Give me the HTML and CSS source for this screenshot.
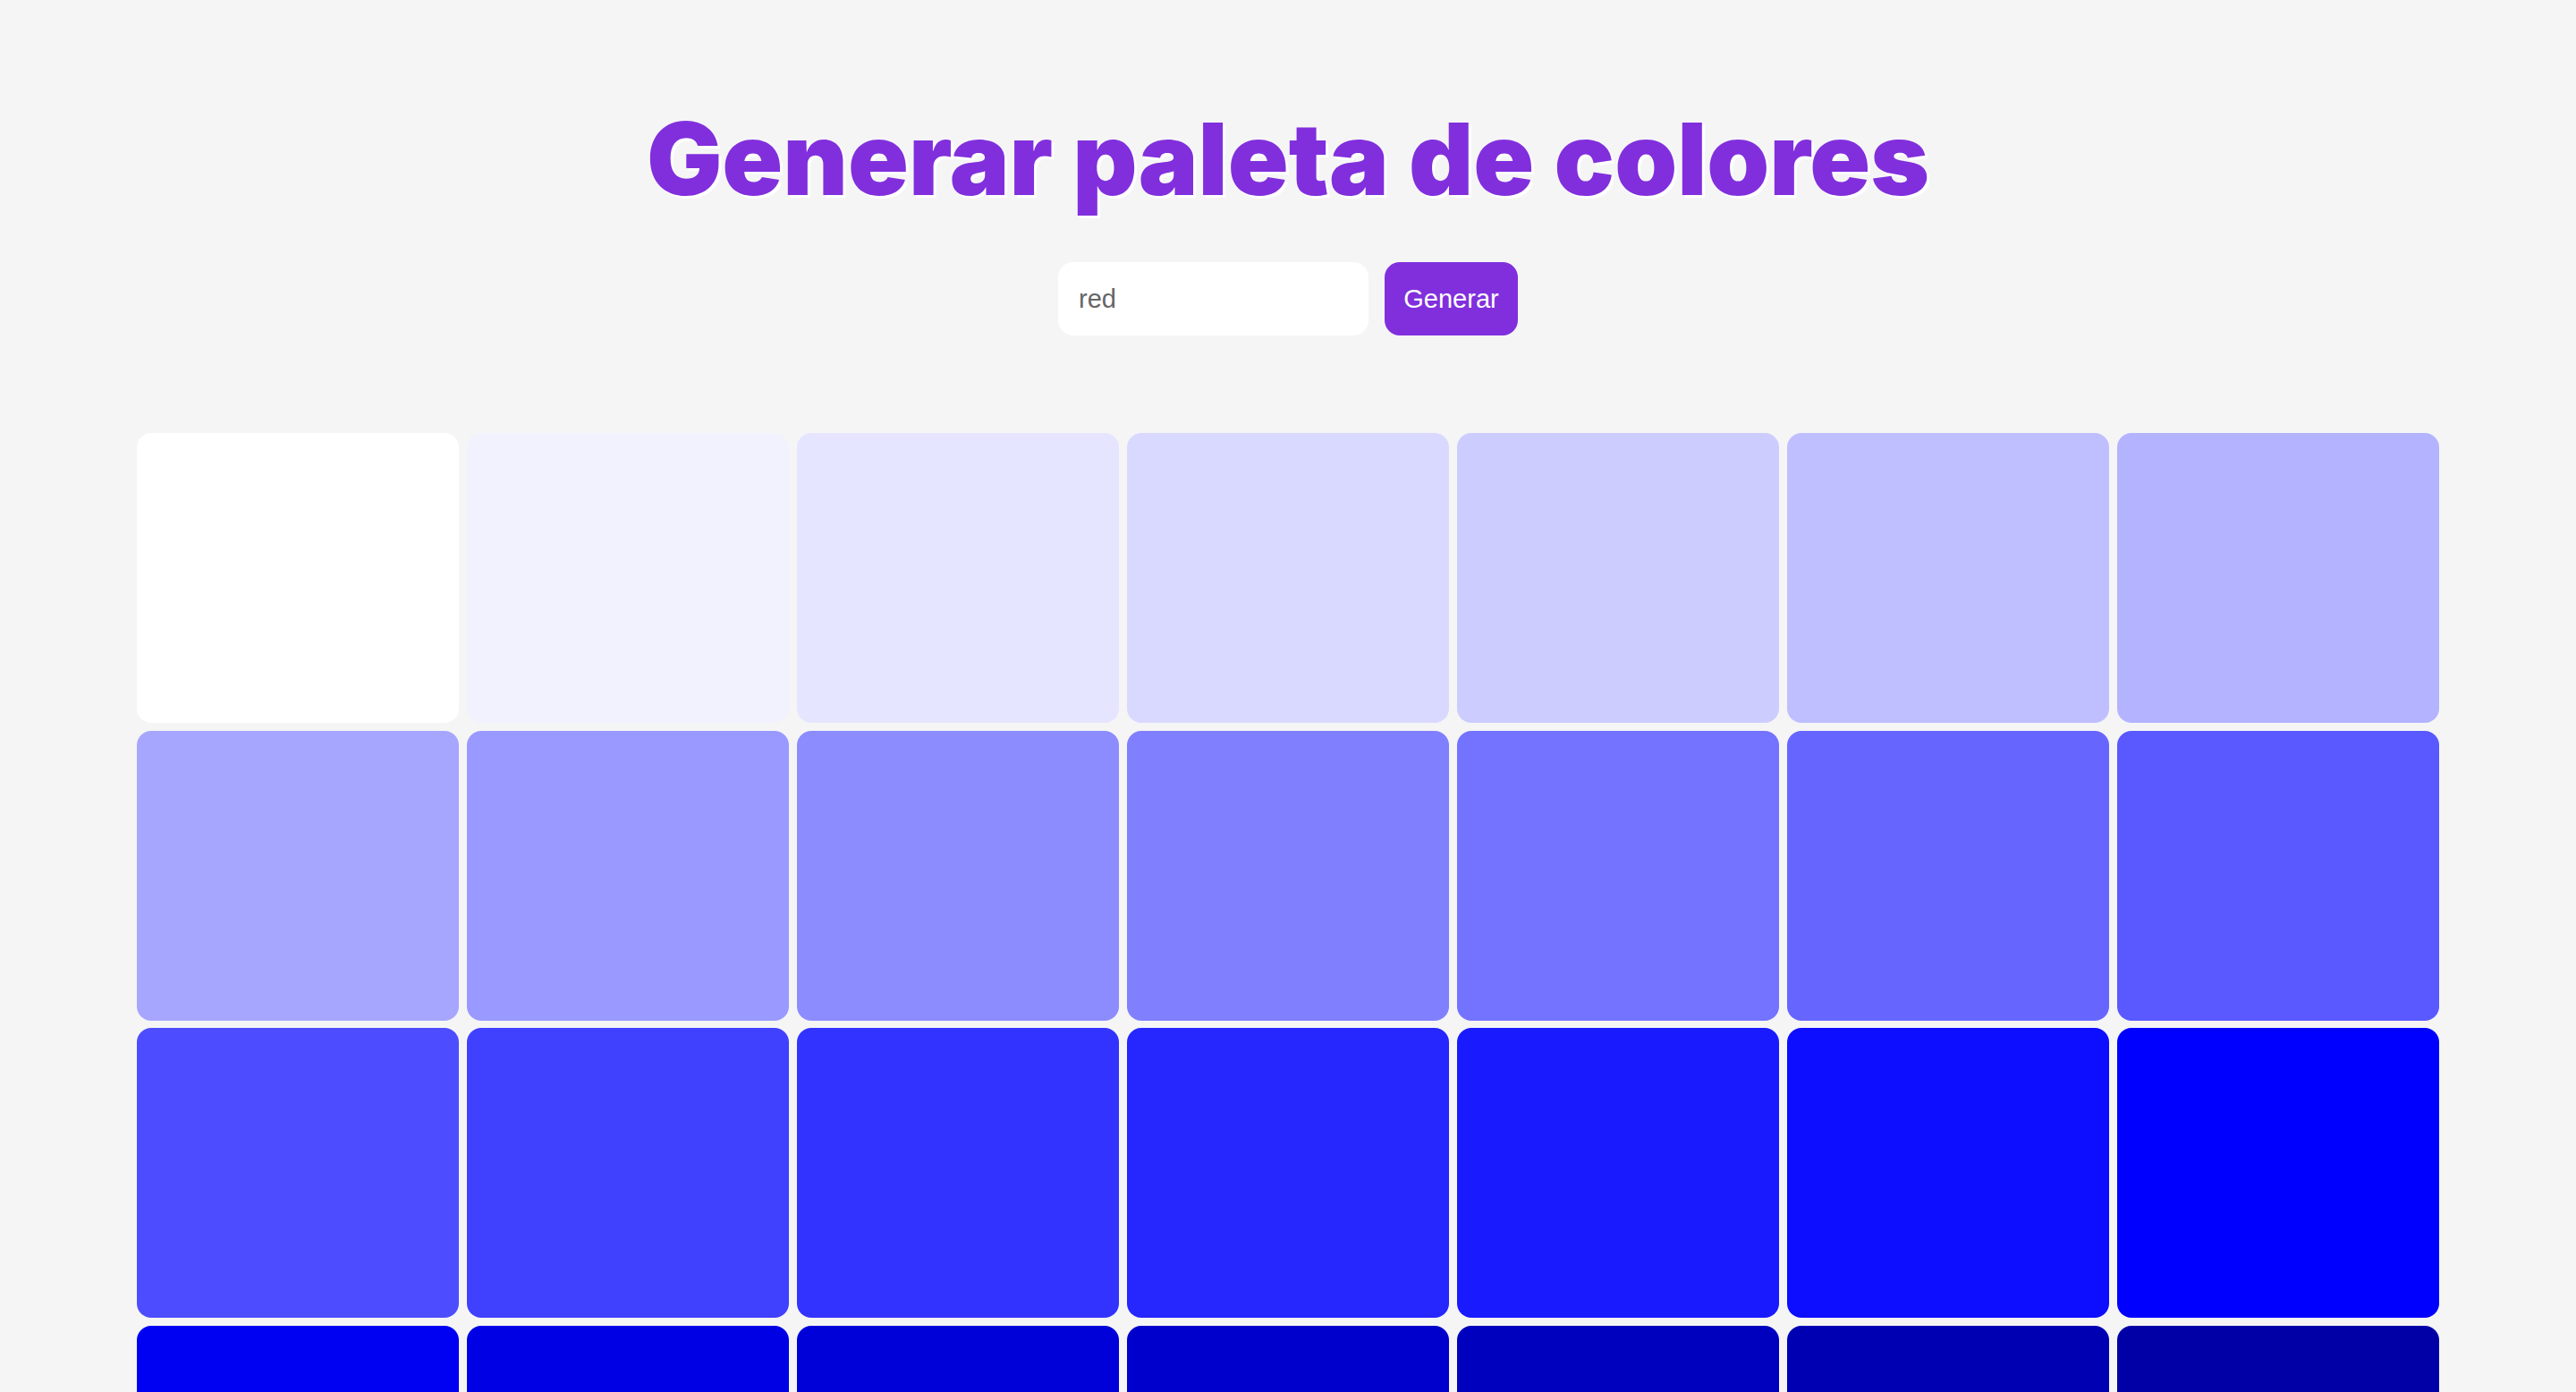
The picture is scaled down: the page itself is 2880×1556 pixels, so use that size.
FILE: index.html
```html
<!DOCTYPE html>
<html lang="es">
<head>
<meta charset="utf-8">
<title>Generar paleta de colores</title>
<link rel="stylesheet" href="styles.css">
</head>
<body>
<main class="page">
  <h1 class="title">Generar paleta de colores</h1>
  <form class="search" onsubmit="return false">
    <input class="search-input" type="text" value="red">
    <button class="search-btn" type="submit">Generar</button>
  </form>
  <section class="palette">
    <div class="swatch" style="background:#ffffff"></div>
    <div class="swatch" style="background:#f2f2ff"></div>
    <div class="swatch" style="background:#e5e5ff"></div>
    <div class="swatch" style="background:#d9d9ff"></div>
    <div class="swatch" style="background:#ccccff"></div>
    <div class="swatch" style="background:#bfbfff"></div>
    <div class="swatch" style="background:#b3b3ff"></div>
    <div class="swatch" style="background:#a6a6ff"></div>
    <div class="swatch" style="background:#9999ff"></div>
    <div class="swatch" style="background:#8c8cff"></div>
    <div class="swatch" style="background:#8080ff"></div>
    <div class="swatch" style="background:#7373ff"></div>
    <div class="swatch" style="background:#6666ff"></div>
    <div class="swatch" style="background:#5959ff"></div>
    <div class="swatch" style="background:#4d4dff"></div>
    <div class="swatch" style="background:#4040ff"></div>
    <div class="swatch" style="background:#3333ff"></div>
    <div class="swatch" style="background:#2626ff"></div>
    <div class="swatch" style="background:#1a1aff"></div>
    <div class="swatch" style="background:#0d0dff"></div>
    <div class="swatch" style="background:#0000ff"></div>
    <div class="swatch" style="background:#0000f2"></div>
    <div class="swatch" style="background:#0000e5"></div>
    <div class="swatch" style="background:#0000d9"></div>
    <div class="swatch" style="background:#0000cc"></div>
    <div class="swatch" style="background:#0000bf"></div>
    <div class="swatch" style="background:#0000b3"></div>
    <div class="swatch" style="background:#0000a6"></div>
    <div class="swatch" style="background:#000099"></div>
    <div class="swatch" style="background:#00008c"></div>
    <div class="swatch" style="background:#000080"></div>
    <div class="swatch" style="background:#000073"></div>
    <div class="swatch" style="background:#000066"></div>
    <div class="swatch" style="background:#000059"></div>
    <div class="swatch" style="background:#00004d"></div>
  </section>
</main>
</body>
</html>
```

FILE: styles.css
```css
* { box-sizing: border-box; }

html, body {
  margin: 0;
  padding: 0;
  background: #f5f5f6;
}

.page {
  display: flex;
  flex-direction: column;
  align-items: center;
  padding-top: 110px;
  padding-bottom: 60px;
}

.title {
  margin: 0;
  font-family: "Inter", "Noto Sans", sans-serif;
  font-weight: 900;
  font-size: 112px;
  line-height: 1.2;
  color: #812fdd;
  text-shadow: 3px 3px 0 #ffffff;
  letter-spacing: 0;
}

.search {
  display: flex;
  gap: 18px;
  margin-top: 49px;
}

.search-input {
  width: 347px;
  height: 82px;
  border: none;
  border-radius: 17px;
  background: #ffffff;
  padding: 0 23px;
  font-family: "Liberation Sans", Arial, sans-serif;
  font-size: 29px;
  color: #666666;
  outline: none;
}

.search-btn {
  width: 149px;
  height: 82px;
  border: none;
  border-radius: 17px;
  background: #812fdd;
  color: #ffffff;
  font-family: "Liberation Sans", Arial, sans-serif;
  font-size: 29px;
  padding: 0;
  cursor: pointer;
}

.palette {
  margin-top: 109px;
  width: 2574px;
  display: grid;
  grid-template-columns: repeat(7, 1fr);
  grid-auto-rows: 324px;
  gap: 8.5px 9px;
}

.swatch {
  border-radius: 16px;
}
```
